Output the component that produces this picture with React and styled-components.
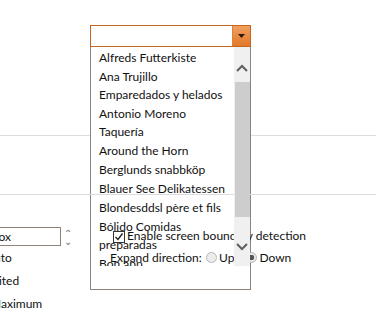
import React from 'react';
import styled, { createGlobalStyle } from 'styled-components';

const GlobalStyle = createGlobalStyle`
  body {
    margin: 0;
    overflow: hidden;
    background: #fff;
    font-family: Lato, "Open Sans", sans-serif;
    font-size: 12px;
    color: #111;
  }
`;

const customers = [
  'Alfreds Futterkiste',
  'Ana Trujillo Emparedados y helados',
  'Antonio Moreno Taquería',
  'Around the Horn',
  'Berglunds snabbköp',
  'Blauer See Delikatessen',
  'Blondesddsl père et fils',
  'Bólido Comidas preparadas',
  'Bon app',
  "B's Beverages",
];

const App = () => {
  return (
    <Page>
      <GlobalStyle />
      <ComboWrap>
        <Combo>
          <ComboInput />
          <DropButton>
            <svg width="7" height="4" viewBox="0 0 7 4">
              <path d="M0 0h7L3.5 4z" fill="#2b1a10" />
            </svg>
          </DropButton>
        </Combo>
        <Popup>
          <ItemList>
            {customers.map((c) => (
              <Item key={c}>{c}</Item>
            ))}
          </ItemList>
          <ScrollBar>
            <ScrollArrow $h={35} $pad={17}>
              <svg width="12" height="8" viewBox="0 0 12 8">
                <path d="M1 7l5-5 5 5" fill="none" stroke="#5f5f5f" strokeWidth="2" />
              </svg>
            </ScrollArrow>
            <Thumb />
            <ScrollArrow $h={49} $pad={26}>
              <svg width="12" height="8" viewBox="0 0 12 8">
                <path d="M1 1l5 5 5-5" fill="none" stroke="#5f5f5f" strokeWidth="2" />
              </svg>
            </ScrollArrow>
          </ScrollBar>
        </Popup>
      </ComboWrap>

      <Divider $gap={88} />
      <Divider $gap={58} $over />

      <Form>
        <LeftCol>
          <SpinRow>
            <SpinBox>ComboBox</SpinBox>
            <Spinner>
              <span>&#8963;</span>
              <span>&#8964;</span>
            </Spinner>
          </SpinRow>
          <Cut $shift={-14} $top={3}>Auto</Cut>
          <Cut $shift={-20} $top={6}>Limited</Cut>
          <Cut $shift={-10} $top={6}>Maximum</Cut>
        </LeftCol>
        <RightCol>
          <CheckRow>
            <CheckBox>
              <svg width="10" height="10" viewBox="0 0 10 10">
                <path d="M1.5 5l2.5 2.5 4.5-6" fill="none" stroke="#222" strokeWidth="1.4" />
              </svg>
            </CheckBox>
            Enable screen boundary detection
          </CheckRow>
          <RadioRow>
            <RadioLabel>Expand direction:</RadioLabel>
            <Radio $gap={6} />
            <span>Up</span>
            <Radio $gap={12} $checked />
            <span>Down</span>
          </RadioRow>
        </RightCol>
      </Form>
    </Page>
  );
};

export default App;

const Page = styled.div`
  position: relative;
  width: 388px;
  height: 329px;
  overflow: hidden;
  padding-top: 25px;
  box-sizing: border-box;
`;

const ComboWrap = styled.div`
  position: relative;
  margin-left: 90px;
  width: 161px;
`;

const Combo = styled.div`
  display: flex;
  height: 22px;
  border: 1px solid #c5651f;
  box-sizing: border-box;
  background: #fff;
`;

const ComboInput = styled.div`
  flex: 1;
`;

const DropButton = styled.div`
  width: 17px;
  display: flex;
  align-items: center;
  justify-content: center;
  background: linear-gradient(#f0a060, #e2782a);
  border-left: 1px solid #d9823f;
`;

const Popup = styled.div`
  position: absolute;
  top: 100%;
  left: 0;
  width: 161px;
  height: 243px;
  box-sizing: border-box;
  border: 1px solid #8e8379;
  border-top: none;
  background: #fff;
  display: flex;
  align-items: flex-start;
`;

const ItemList = styled.div`
  flex: 1;
  height: 219px;
  overflow: hidden;
  padding-top: 1.5px;
  box-sizing: border-box;
`;

const Item = styled.div`
  padding: 0.5px 6px 0.5px 8px;
  line-height: 18px;
`;

const ScrollBar = styled.div`
  position: relative;
  z-index: 3;
  width: 16px;
  height: 219px;
  background: #f0f0f0;
  display: flex;
  flex-direction: column;
  align-items: center;
`;

const ScrollArrow = styled.div`
  height: ${(p) => p.$h}px;
  box-sizing: border-box;
  padding-top: ${(p) => p.$pad}px;
  display: flex;
  justify-content: center;
`;

const Thumb = styled.div`
  width: 15px;
  height: 135px;
  background: #cdcdcd;
`;

const Divider = styled.div`
  position: ${(p) => (p.$over ? 'relative' : 'static')};
  z-index: ${(p) => (p.$over ? 2 : 'auto')};
  margin-top: ${(p) => p.$gap}px;
  width: 376px;
  height: 1px;
  background: #dcdcdc;
`;

const Form = styled.div`
  display: flex;
  margin-top: 32px;
`;

const LeftCol = styled.div`
  width: 110px;
  display: flex;
  flex-direction: column;
`;

const SpinRow = styled.div`
  display: flex;
  align-items: center;
  margin-left: -60px;
`;

const SpinBox = styled.div`
  width: 121px;
  height: 19px;
  border: 1px solid #8e8379;
  box-sizing: border-box;
  padding-left: 12px;
  line-height: 17px;
  white-space: nowrap;
`;

const Spinner = styled.div`
  display: flex;
  flex-direction: column;
  margin-left: 3px;
  font-size: 10px;
  line-height: 8px;
  color: #777;
`;

const Cut = styled.div`
  margin-left: ${(p) => p.$shift}px;
  margin-top: ${(p) => p.$top}px;
  line-height: 17px;
  white-space: nowrap;
`;

const RightCol = styled.div`
  position: relative;
  z-index: 2;
  display: flex;
  flex-direction: column;
`;

const CheckRow = styled.div`
  display: flex;
  align-items: center;
  margin-left: 3px;
  line-height: 17px;
  white-space: nowrap;
`;

const CheckBox = styled.span`
  width: 12px;
  height: 12px;
  border: 1px solid #333;
  box-sizing: border-box;
  display: inline-flex;
  align-items: center;
  justify-content: center;
  margin-right: 2px;
  margin-top: 3px;
`;

const RadioRow = styled.div`
  display: flex;
  align-items: center;
  margin-top: 5px;
  line-height: 17px;
  white-space: nowrap;
`;

const RadioLabel = styled.span`
  width: 90px;
`;

const Radio = styled.span`
  width: 11px;
  height: 11px;
  border-radius: 50%;
  border: 1px solid #b8b8b8;
  box-sizing: border-box;
  background: ${(p) =>
    p.$checked ? 'radial-gradient(circle, #555 0 2.5px, #e6e6e6 3px)' : '#ececec'};
  margin: 0 2px 0 ${(p) => p.$gap}px;
`;
